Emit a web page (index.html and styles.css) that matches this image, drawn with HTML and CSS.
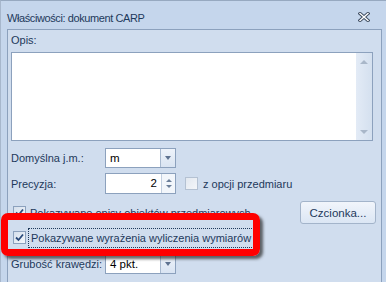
FILE: index.html
```html
<!DOCTYPE html>
<html lang="pl">
<head>
    <meta charset="UTF-8">
    <title>Właściwości: dokument CARP</title>
    <link rel="stylesheet" href="styles.css">
</head>
<body>

    <div class="window">
        <div class="titlebar">
            <span class="title">Właściwości: dokument CARP</span>
            <span class="close-btn">
                <svg width="12" height="10" viewBox="0 0 12 10">
                    <path d="M2 1.5 L10 8.5 M10 1.5 L2 8.5" stroke="#3b4a5e" stroke-width="3.2" stroke-linecap="square"/>
                    <path d="M2 1.5 L10 8.5 M10 1.5 L2 8.5" stroke="#ffffff" stroke-width="1.4" stroke-linecap="square"/>
                </svg>
            </span>
        </div>

        <div class="panel">
            <div class="label-opis">Opis:</div>
            <div class="memo">
                <div class="memo-text"></div>
                <div class="scrollbar">
                    <span class="arrow-up"></span>
                    <span class="arrow-down"></span>
                </div>
            </div>

            <!-- jednostka -->
            <div class="row row-unit">
                <span class="label">Domyślna j.m.:</span>
                <div class="combo">
                    <span class="combo-value">m</span>
                    <span class="combo-btn"><span class="arrow-down dark"></span></span>
                </div>
            </div>

            <!-- precyzja -->
            <div class="row row-prec">
                <span class="label">Precyzja:</span>
                <div class="combo spin">
                    <span class="combo-value right">2</span>
                    <span class="spin-btns">
                        <span class="arrow-up small"></span>
                        <span class="arrow-down small"></span>
                    </span>
                </div>
                <span class="check disabled"></span>
                <span class="check-label">z opcji przedmiaru</span>
            </div>

            <div class="row row-opts">
                <span class="check checked"><svg width="9" height="9" viewBox="0 0 9 9"><path d="M1 4.5 L3.5 7 L8 1.5" fill="none" stroke="#2a4a7a" stroke-width="1.8"/></svg></span>
                <span class="check-label">Pokazywane opisy obiektów przedmiarowych</span>
                <button class="font-btn">Czcionka...</button>
            </div>

            <div class="row row-focus">
                <span class="check checked"><svg width="9" height="9" viewBox="0 0 9 9"><path d="M1 4.5 L3.5 7 L8 1.5" fill="none" stroke="#2a4a7a" stroke-width="1.8"/></svg></span>
                <span class="check-label focused">Pokazywane wyrażenia wyliczenia wymiarów</span>
            </div>

            <div class="row row-width">
                <span class="label">Grubość krawędzi:</span>
                <div class="combo">
                    <span class="combo-value">4 pkt.</span>
                    <span class="combo-btn"><span class="arrow-down dark"></span></span>
                </div>
            </div>

            <!-- red annotation frame -->
            <div class="highlight"></div>
        </div>
    </div>

</body>
</html>
```

FILE: styles.css
```css
body { margin: 0; font-family: "Liberation Sans", Arial, sans-serif; font-size: 11px; color: #1e395b; background: #c5d6ec; }
.window {
    width: 385px; height: 282px; overflow: hidden;
    border-top: 1px solid #97a9c0; border-left: 1px solid #a7b7cc; border-right: 1px solid #97a9c0;
    background: #c5d6ec; position: relative;
}
.titlebar { height: 28px; display: flex; justify-content: space-between; padding: 0 16px 0 6px; }
.title { padding-top: 11px; line-height: 13px; font-size: 11px; letter-spacing: -0.4px; }
.close-btn { padding-top: 11px; }

.panel {
    margin-left: 6px; width: 370px; height: 260px;
    border: 1px solid #8ca1bd; border-bottom: none;
    background: #d0ddee; padding: 3px 0 0 3px; position: relative;
}
.label-opis { line-height: 13px; padding-top: 1px; }
.memo {
    margin-top: 5px; width: 360px; height: 87px;
    border: 1px solid #8ca1bd; background: white; display: flex;
}
.memo-text { flex: 1; }
.scrollbar {
    width: 16px; background: linear-gradient(to right, #e3ebf6, #d4e0ef);
    display: flex; flex-direction: column; justify-content: space-between; align-items: center;
    padding: 7px 0 6px;
}
.arrow-up, .arrow-down { width: 0; height: 0; border-left: 4px solid transparent; border-right: 4px solid transparent; }
.arrow-up { border-bottom: 4px solid #a9b7c9; }
.arrow-down { border-top: 4px solid #a9b7c9; }
.arrow-down.dark { border-top-color: #5e7290; border-left-width: 3.5px; border-right-width: 3.5px; }
.arrow-up.small, .arrow-down.small { border-left-width: 3px; border-right-width: 3px; border-top-width: 3px; border-bottom-width: 3px; }
.arrow-up.small { border-bottom-color: #6b7f9a; }
.arrow-down.small { border-top-color: #6b7f9a; }

.row { display: flex; align-items: center; }
.label { width: 94px; }
.row-unit { margin-top: 7px; height: 20px; }
.row-prec { margin-top: 5px; height: 21px; }
.row-opts { margin-top: 7px; height: 23px; padding-left: 2px; }
.row-focus { margin-top: 4px; height: 19px; padding-left: 2px; }
.row-width { margin-top: 7px; height: 20px; }

.combo {
    width: 69px; height: 18px; border: 1px solid #8ca1bd; background: white;
    display: flex; align-items: stretch; color: #000;
}
.combo-value { flex: 1; padding-left: 4px; line-height: 18px; font-size: 11.5px; }
.combo-value.right { text-align: right; padding-right: 4px; }
.combo-btn {
    width: 14px; border-left: 1px solid #a8b9cf;
    background: linear-gradient(#eef3fa, #d9e4f2);
    display: flex; align-items: center; justify-content: center;
}
.spin { height: 19px; }
.spin-btns {
    width: 13px; border-left: 1px solid #c2cfe0; background: #f2f6fb;
    display: flex; flex-direction: column; justify-content: space-around; align-items: center; padding: 3px 0;
}

.check {
    width: 11px; height: 11px; border: 1px solid #8ca1bd;
    background: linear-gradient(135deg, #d5dfec, #f4f7fb);
    display: flex; align-items: center; justify-content: center;
}
.check.disabled { margin-left: 9px; border-color: #b4c1d2; background: linear-gradient(135deg, #e2e8f0, #f4f6f9); }
.check-label { margin-left: 4px; }
.row-prec .check-label { margin-left: 5px; }
.check-label.focused { outline: 1px dotted #1e395b; outline-offset: 0; padding: 3px 2px; margin-left: 3px; }

.font-btn {
    margin-left: auto; margin-right: 5px; width: 76px; height: 23px;
    border: 1px solid #a3b4ca; border-radius: 3px;
    background: linear-gradient(#f1f5fb, #dbe6f4);
    font-family: inherit; font-size: 11.5px; color: #1e395b; padding: 0;
}

.highlight {
    position: absolute; left: -7px; top: 183px; width: 245px; height: 29px;
    border: 7px solid #ff0000; border-radius: 7px;
    box-shadow: 3px 3px 3px rgba(40, 40, 40, 0.7);
}
```
